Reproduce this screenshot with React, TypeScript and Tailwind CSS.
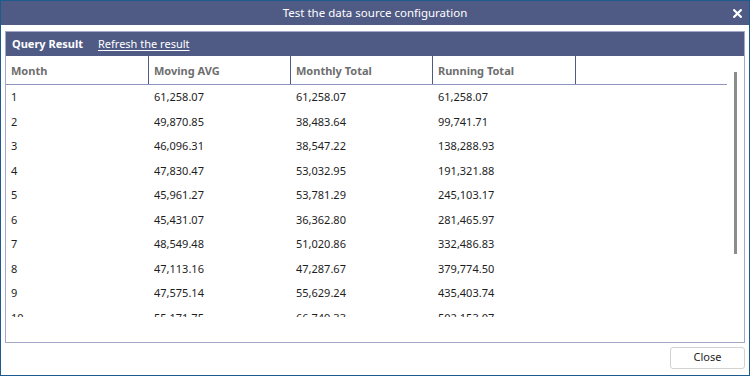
import React from "react";

const ROWS = [
  ["1", "61,258.07", "61,258.07", "61,258.07"],
  ["2", "49,870.85", "38,483.64", "99,741.71"],
  ["3", "46,096.31", "38,547.22", "138,288.93"],
  ["4", "47,830.47", "53,032.95", "191,321.88"],
  ["5", "45,961.27", "53,781.29", "245,103.17"],
  ["6", "45,431.07", "36,362.80", "281,465.97"],
  ["7", "48,549.48", "51,020.86", "332,486.83"],
  ["8", "47,113.16", "47,287.67", "379,774.50"],
  ["9", "47,575.14", "55,629.24", "435,403.74"],
  ["10", "55,171.75", "66,749.33", "502,153.07"],
];

const COLUMNS = ["Month", "Moving AVG", "Monthly Total", "Running Total"];
const COL_W = ["w-[143px]", "w-[142px]", "w-[142px]", "w-[143px]"];

export default function App() {
  return (
    <div
      className="flex h-[376px] w-[750px] flex-col border border-[#1d5b8f] bg-white text-[11px]"
      style={{ fontFamily: '"Noto Sans", "Open Sans", sans-serif' }}
    >
      {/* ── Title bar ── */}
      <div className="flex h-[24px] shrink-0 items-center bg-[#4f5a85] text-[11.5px] text-white">
        <div className="w-[24px]" />
        <div className="flex-1 text-center leading-none">Test the data source configuration</div>
        <div className="flex w-[24px] items-center justify-center">
          <svg width="9" height="9" viewBox="0 0 9 9" stroke="white" strokeWidth="2.2" strokeLinecap="square">
            <path d="M1.2 1.2l6.6 6.6M7.8 1.2L1.2 7.8" />
          </svg>
        </div>
      </div>

      {/* ── Body ── */}
      <div className="flex flex-1 flex-col px-[4px] pt-[6px]">
        <div className="flex h-[312px] flex-col border border-[#a3a8c8]">
          {/* Panel header */}
          <div className="flex h-[24px] shrink-0 items-center gap-[15px] bg-[#4f5a85] px-[6px] text-white">
            <span className="font-bold">Query Result</span>
            <span className="underline underline-offset-2">Refresh the result</span>
          </div>

          <div className="flex flex-1">
            {/* Grid */}
            <div className="flex w-[721px] flex-col">
              <div className="flex h-[29px] shrink-0 border-b border-[#8e93c2]">
                {COLUMNS.map((c, i) => (
                  <div
                    key={c}
                    className={`flex ${COL_W[i]} items-center border-r border-[#4f5a85] px-[5px] pt-[2px] font-bold text-[#6e6e6e]`}
                  >
                    {c}
                  </div>
                ))}
              </div>
              <div className="h-[232px] overflow-hidden">
                {ROWS.map((r) => (
                  <div key={r[0]} className="flex h-[24.5px] items-center text-[#1e1e1e]">
                    {r.map((v, i) => (
                      <div key={i} className={`${COL_W[i]} px-[5px]`}>
                        {v}
                      </div>
                    ))}
                  </div>
                ))}
              </div>
            </div>

            {/* Scrollbar */}
            <div className="ml-[7px] pt-[16px]">
              <div className="h-[182px] w-[3px] bg-[#8c8c8c]" />
            </div>
          </div>
        </div>

        {/* Footer */}
        <div className="flex flex-1 items-center justify-end pb-[3px]">
          <button
            type="button"
            className="h-[22px] w-[75px] rounded-[3px] border border-[#d2d2d2] bg-white text-[#1e1e1e]"
          >
            Close
          </button>
        </div>
      </div>
    </div>
  );
}
